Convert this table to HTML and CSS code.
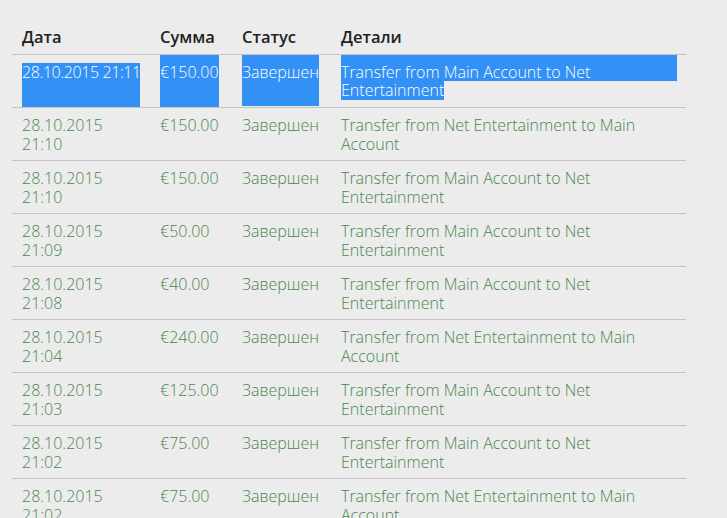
FILE: index.html
```html
<!DOCTYPE html>
<html lang="ru">

<head>
    <meta charset="UTF-8">
    <meta name="viewport" content="width=device-width, initial-scale=1.0">
    <title>История переводов</title>

    <link rel="stylesheet" href="styles.css">
</head>

<body>
    <div id="historia">
        <table class="tabela">
            <thead>
                <tr>
                    <th class="col-data">Дата</th>
                    <th class="col-soma">Сумма</th>
                    <th class="col-status">Статус</th>
                    <th class="col-detalhe">Детали</th>
                </tr>
            </thead>
            <tbody>
                <tr class="selecionada">
                    <td><div class="sel sel-data">28.10.2015 21:11</div></td>
                    <td><div class="sel sel-cheia">€150.00</div></td>
                    <td><div class="sel sel-cheia sel-status">Завершен</div></td>
                    <td>
                        <div class="sel sel-linha">Transfer from Main Account to Net</div>
                        <span class="sel sel-fim">Entertainment</span>
                    </td>
                </tr>
                <tr>
                    <td>28.10.2015 21:10</td>
                    <td>€150.00</td>
                    <td>Завершен</td>
                    <td>Transfer from Net Entertainment to Main Account</td>
                </tr>
                <tr>
                    <td>28.10.2015 21:10</td>
                    <td>€150.00</td>
                    <td>Завершен</td>
                    <td>Transfer from Main Account to Net Entertainment</td>
                </tr>
                <tr>
                    <td>28.10.2015 21:09</td>
                    <td>€50.00</td>
                    <td>Завершен</td>
                    <td>Transfer from Main Account to Net Entertainment</td>
                </tr>
                <tr>
                    <td>28.10.2015 21:08</td>
                    <td>€40.00</td>
                    <td>Завершен</td>
                    <td>Transfer from Main Account to Net Entertainment</td>
                </tr>
                <tr>
                    <td>28.10.2015 21:04</td>
                    <td>€240.00</td>
                    <td>Завершен</td>
                    <td>Transfer from Net Entertainment to Main Account</td>
                </tr>
                <tr>
                    <td>28.10.2015 21:03</td>
                    <td>€125.00</td>
                    <td>Завершен</td>
                    <td>Transfer from Main Account to Net Entertainment</td>
                </tr>
                <tr>
                    <td>28.10.2015 21:02</td>
                    <td>€75.00</td>
                    <td>Завершен</td>
                    <td>Transfer from Main Account to Net Entertainment</td>
                </tr>
                <tr>
                    <td>28.10.2015 21:02</td>
                    <td>€75.00</td>
                    <td>Завершен</td>
                    <td>Transfer from Net Entertainment to Main Account</td>
                </tr>
            </tbody>
        </table>
    </div>
</body>

</html>
```

FILE: styles.css
```css
* {
    padding: 0;
    margin: 0;
    box-sizing: border-box;
}

body {
    background-color: #ececec;
    font-family: 'Open Sans', 'Noto Sans', sans-serif;
    overflow: hidden;
}

#historia {
    padding: 19px 0 0 12px;
}

.tabela {
    width: 674px;
    border-collapse: collapse;
    table-layout: fixed;
}

.col-data {
    width: 138px;
}

.col-soma {
    width: 82px;
}

.col-status {
    width: 99px;
}

.col-detalhe {
    width: 355px;
}

.tabela th {
    text-align: left;
    font-size: 16.5px;
    font-weight: 600;
    color: #222;
    padding: 7px 0 6px 10px;
    line-height: 22px;
    border-bottom: 1px solid #c4c4c4;
}

.tabela td {
    vertical-align: top;
    font-weight: 300;
    font-size: 16px;
    line-height: 19px;
    color: #4b874e;
    padding: 8px 9px 6px 10px;
    height: 53px;
    border-bottom: 1px solid #c4c4c4;
}

.tabela td:first-child {
    padding-right: 30px;
}

.selecionada td {
    padding-top: 0;
    padding-bottom: 0;
}

.tabela .selecionada td:first-child {
    padding-right: 0;
}

.sel {
    background-color: #3390f4;
    color: #fff;
}

.sel-data {
    width: 118px;
    white-space: nowrap;
    letter-spacing: -0.4px;
    margin-top: 8px;
    height: 44px;
}

.sel-cheia {
    display: inline-block;
    padding-top: 8px;
    height: 52px;
}

.sel-status {
    height: 51px;
}

.sel-linha {
    width: 336px;
    padding-top: 8px;
    height: 26px;
    line-height: 19px;
}

.sel-fim {
    display: inline-block;
    height: 19px;
}
```
